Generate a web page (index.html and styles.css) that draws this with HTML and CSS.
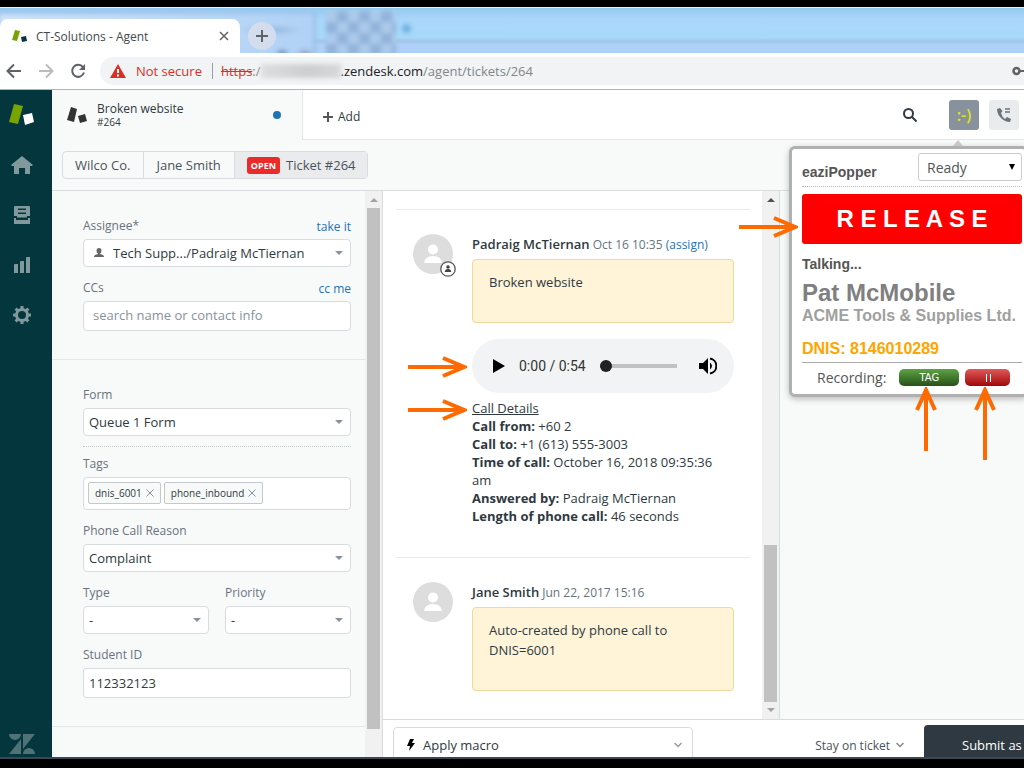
FILE: index.html
```html
<!DOCTYPE html>
<html lang="en">
<head>
    <meta charset="UTF-8">
    <meta name="viewport" content="width=device-width, initial-scale=1.0">
    <title>CT-Solutions - Agent</title>
    <link rel="stylesheet" href="styles.css">
</head>
<body>

<div class="browser">
    <div class="tab-strip">
        <div class="glass-text"></div>
        <div class="glass-checks"></div>
        <div class="browser-tab">
            <svg class="favicon" width="16" height="14" viewBox="0 0 16 14"><path d="M3 1l5 1-3 10-5-1z" fill="#78a300"/><path d="M9 8l5-1 1 5-5 1z" fill="#03363d"/></svg>
            <span>CT-Solutions - Agent</span>
            <button class="icon-btn tab-close" aria-label="Close tab"><svg width="10" height="10" viewBox="0 0 10 10"><path d="M1 1l8 8M9 1l-8 8" stroke="#5f6368" stroke-width="1.500"/></svg></button>
        </div>
        <button class="icon-btn new-tab" aria-label="New tab"><svg width="12" height="12" viewBox="0 0 12 12"><path d="M6 0v12M0 6h12" stroke="#5f6368" stroke-width="2"/></svg></button>
    </div>
    <div class="toolbar">
        <button class="icon-btn" aria-label="Back"><svg width="16" height="16" viewBox="0 0 16 16"><path d="M15 8H2M8 1.500L1.500 8 8 14.500" fill="none" stroke="#5f6368" stroke-width="2"/></svg></button>
        <button class="icon-btn" aria-label="Forward"><svg width="16" height="16" viewBox="0 0 16 16"><path d="M1 8h13M8 1.500L14.500 8 8 14.500" fill="none" stroke="#babcbe" stroke-width="2"/></svg></button>
        <button class="icon-btn" aria-label="Reload"><svg width="16" height="16" viewBox="0 0 16 16"><path d="M13 4.200A6 6 0 1 0 14 9.500" fill="none" stroke="#5f6368" stroke-width="2"/><path d="M15 1v6H9z" fill="#5f6368"/></svg></button>
        <div class="address">
            <svg width="16" height="14" viewBox="0 0 16 14"><path d="M8 0l8 14H0z" fill="#d93025"/><path d="M8 5v4M8 10.500v2" stroke="#fff" stroke-width="2"/></svg>
            <span class="not-secure">Not secure</span>
            <span class="url"><s>https</s>:/<i class="url-blur"></i><b>.zendesk.com</b>/agent/tickets/264</span>
            <svg class="key" width="20" height="10" viewBox="0 0 20 10"><circle cx="4.500" cy="5" r="3" fill="none" stroke="#5f6368" stroke-width="2.500"/><path d="M8 4h11v4h-4V6H8z" fill="#5f6368"/></svg>
        </div>
    </div>
</div>

<div class="app">
    <nav class="sidebar">
        <svg class="logo" width="26" height="22" viewBox="0 0 26 22"><path d="M5 0l9 2-5 18-9-2z" fill="#78a300"/><path d="M14 11l9-2 2 9-9 3z" fill="#fff"/></svg>
        <svg width="22" height="18" viewBox="0 0 22 18"><path d="M11 0l11 9-1 1h-2v8h-5v-6H8v6H3v-8H1l-1-1z"/></svg>
        <svg width="16" height="18" viewBox="0 0 16 18"><path d="M1 0h14q1 0 1 1v9h-3v1.500H3V10H0V1q0-1 1-1zM4 2.500V4h8V2.500zm0 4V8h8V6.500z" fill-rule="evenodd"/><path d="M0 12h2v2h12v-2h2v6H0z"/></svg>
        <svg width="16" height="18" viewBox="0 -1 16 18"><path d="M0 8q0-1 1-1h3v9H0zM6 5q0-1 1-1h3v12H6zM12 1q0-1 1-1h3v16h-4z"/></svg>
        <svg width="18" height="18" viewBox="0 0 18 18"><circle cx="9" cy="9" r="5.500" fill="none" stroke="#81999c" stroke-width="3"/><path d="M9 0v3M9 15v3M0 9h3M15 9h3M2.600 2.600l2.200 2.200M13.200 13.200l2.200 2.200M15.400 2.600l-2.200 2.200M4.800 13.200l-2.200 2.200" stroke="#81999c" stroke-width="3"/></svg>
        <svg class="zendesk" width="26" height="20" viewBox="0 0 26 20"><path d="M0 0h12a6 6 0 0 1-12 0zM12 5v15H0zM14 0h12L14 15zM14 20a6 6 0 0 1 12 0z"/></svg>
    </nav>

    <div class="workspace">
        <header class="top-bar">
            <div class="ticket-tab">
                <svg width="20" height="16" viewBox="0 0 20 16"><path d="M4 0l6 2-3 13-7-2z" fill="#333"/><path d="M11 9l7-2 2 7-7 2z" fill="#333"/></svg>
                <div class="ticket-tab-text">
                    <div>Broken website</div>
                    <div class="ticket-id">#264</div>
                </div>
                <span class="unsaved"></span>
            </div>
            <button class="add-tab"><svg width="10" height="10" viewBox="0 0 10 10"><path d="M5 0v10M0 5h10" stroke="#555" stroke-width="2"/></svg>Add</button>
            <button class="icon-btn search" aria-label="Search"><svg width="14" height="14" viewBox="0 0 14 14"><circle cx="5.500" cy="5.500" r="4.500" fill="none" stroke="#2f3941" stroke-width="2"/><path d="M9 9l4.500 4.500" stroke="#2f3941" stroke-width="2"/></svg></button>
            <button class="app-btn popper-btn">:-)</button>
            <button class="app-btn" aria-label="Talk"><svg width="14" height="14" viewBox="0 0 14 14"><path d="M3 0L0 1q0 5 4 9t9 4l1-3-4-2-2 2Q5 9 4 5l1.500-2z" fill="#68737d"/><path d="M8 1h5M8 4h5" stroke="#68737d" stroke-width="1.500"/></svg></button>
        </header>

        <div class="crumbs-bar">
            <div class="crumbs">
                <a href="#">Wilco Co.</a>
                <a href="#">Jane Smith</a>
                <a href="#" class="current"><span class="status">OPEN</span>Ticket #264</a>
            </div>
        </div>

        <div class="columns">
            <div class="form-panel">
                <form class="fields">
                    <section>
                        <div class="field">
                            <div class="label-row"><label for="assignee">Assignee*</label><a href="#">take it</a></div>
                            <div class="select with-icon">
                                <svg width="10" height="10" viewBox="0 0 10 10"><path d="M5 0q2.500 0 2.500 2.500T6 5.500V6q4 .5 4 3H0q0-2.500 4-3v-.5Q2.500 5 2.500 2.500T5 0z" fill="#666"/></svg>
                                <select id="assignee"><option>Tech Supp.../Padraig McTiernan</option></select>
                            </div>
                        </div>
                        <div class="field">
                            <div class="label-row"><label for="ccs">CCs</label><a href="#">cc me</a></div>
                            <input type="text" id="ccs" class="ccs" placeholder="search name or contact info">
                        </div>
                    </section>
                    <section>
                        <div class="field dotted">
                            <label for="form">Form</label>
                            <div class="select"><select id="form"><option>Queue 1 Form</option></select></div>
                        </div>
                        <div class="field">
                            <label for="tags">Tags</label>
                            <div class="tags">
                                <span class="tag">dnis_6001<svg width="8" height="8" viewBox="0 0 8 8"><path d="M0.500 0.500l7 7M7.500 0.500l-7 7" stroke="#87929d"/></svg></span>
                                <span class="tag">phone_inbound<svg width="8" height="8" viewBox="0 0 8 8"><path d="M0.500 0.500l7 7M7.500 0.500l-7 7" stroke="#87929d"/></svg></span>
                                <input type="text" id="tags">
                            </div>
                        </div>
                        <div class="field">
                            <label for="reason">Phone Call Reason</label>
                            <div class="select"><select id="reason"><option>Complaint</option></select></div>
                        </div>
                        <div class="field pair">
                            <div>
                                <label for="type">Type</label>
                                <div class="select"><select id="type"><option>-</option></select></div>
                            </div>
                            <div>
                                <label for="priority">Priority</label>
                                <div class="select"><select id="priority"><option>-</option></select></div>
                            </div>
                        </div>
                        <div class="field">
                            <label for="student">Student ID</label>
                            <input type="text" id="student" value="112332123">
                        </div>
                    </section>
                </form>
                <div class="scrollbar form-scroll"><i class="up"></i><div class="thumb"></div></div>
            </div>

            <div class="main">
                <div class="main-row">
                    <div class="conversation">
                        <article class="event">
                            <div class="avatar">
                                <svg width="40" height="40" viewBox="0 0 40 40"><circle cx="20" cy="20" r="20" fill="#ddd"/><circle cx="20" cy="15.500" r="5" fill="#fff"/><path d="M11 29q1-7 9-7t9 7z" fill="#fff"/></svg>
                                <svg class="avatar-badge" width="16" height="16" viewBox="0 0 16 16"><circle cx="8" cy="8" r="7.200" fill="#fff" stroke="#555" stroke-width="1.300"/><circle cx="8" cy="6" r="1.800" fill="#444"/><path d="M4.800 11q0-3 3.200-3t3.200 3z" fill="#444"/></svg>
                            </div>
                            <div class="event-body">
                                <div class="byline"><strong>Padraig McTiernan</strong> <time>Oct 16 10:35</time> <a href="#">(assign)</a></div>
                                <div class="note">Broken website</div>
                                <div class="player">
                                    <svg class="pointer" width="60" height="24" viewBox="0 0 60 24"><path d="M1 12h54M36 3l21 9-21 9"/></svg>
                                    <button class="icon-btn play" aria-label="Play"><svg width="12" height="14" viewBox="0 0 12 14"><path d="M0 0l12 7-12 7z"/></svg></button>
                                    <span class="time">0:00 / 0:54</span>
                                    <input type="range" min="0" max="54" value="0" aria-label="Seek">
                                    <button class="icon-btn" aria-label="Mute"><svg width="18" height="18" viewBox="0 0 18 18"><path d="M0 6h4l5-5v16l-5-5H0z"/><path d="M11 5.500q4 3.500 0 7" /><path d="M11 1.500a7.600 7.600 0 0 1 0 15" fill="none" stroke="#000" stroke-width="2"/></svg></button>
                                </div>
                                <div class="call-details">
                                    <svg class="pointer" width="60" height="24" viewBox="0 0 60 24"><path d="M1 12h54M36 3l21 9-21 9"/></svg>
                                    <div><u>Call Details</u></div>
                                    <div><b>Call from:</b> +60 2</div>
                                    <div><b>Call to:</b> +1 (613) 555-3003</div>
                                    <div><b>Time of call:</b> October 16, 2018 09:35:36 am</div>
                                    <div><b>Answered by:</b> Padraig McTiernan</div>
                                    <div><b>Length of phone call:</b> 46 seconds</div>
                                </div>
                            </div>
                        </article>
                        <article class="event">
                            <div class="avatar">
                                <svg width="40" height="40" viewBox="0 0 40 40"><circle cx="20" cy="20" r="20" fill="#ddd"/><circle cx="20" cy="15.500" r="5" fill="#fff"/><path d="M11 29q1-7 9-7t9 7z" fill="#fff"/></svg>
                            </div>
                            <div class="event-body">
                                <div class="byline"><strong>Jane Smith</strong> <time>Jun 22, 2017 15:16</time></div>
                                <div class="note">Auto-created by phone call to DNIS=6001</div>
                            </div>
                        </article>
                    </div>
                    <div class="scrollbar main-scroll"><i class="up dark"></i><div class="thumb"></div><i class="down"></i></div>
                    <aside class="apps-pane"></aside>
                </div>
                <footer class="actions">
                    <button class="macro">
                        <svg width="8" height="12" viewBox="0 0 8 12"><path d="M3 0h4L5 4h3L2 12l1-5H0z"/></svg>
                        Apply macro
                        <svg class="chevron" width="8" height="6" viewBox="0 0 8 6"><path d="M0.500 1L4 4.500 7.500 1" fill="none" stroke="#999" stroke-width="1.500"/></svg>
                    </button>
                    <button class="stay">Stay on ticket <svg width="8" height="6" viewBox="0 0 8 6"><path d="M0.500 1L4 4.500 7.500 1" fill="none" stroke="#888" stroke-width="1.500"/></svg></button>
                    <button class="submit">Submit as</button>
                </footer>
            </div>
        </div>
    </div>

    <div class="popper">
        <div class="popper-head">
            <label for="agent-state">eaziPopper</label>
            <div class="state"><select id="agent-state"><option>Ready</option></select></div>
        </div>
        <div class="release-row">
            <svg class="pointer" width="60" height="24" viewBox="0 0 60 24"><path d="M1 12h54M36 3l21 9-21 9"/></svg>
            <button class="release">R E L E A S E</button>
        </div>
        <div class="call-state">Talking...</div>
        <div class="caller">Pat McMobile</div>
        <div class="company">ACME Tools &amp; Supplies Ltd.</div>
        <div class="dnis">DNIS: 8146010289</div>
        <div class="recording">
            <span>Recording:</span>
            <div class="rec-item">
                <button class="rec-btn tag-btn">TAG</button>
                <svg class="pointer-up" width="24" height="64" viewBox="0 0 24 64"><path d="M12 64V4M3 23L12 3l9 20"/></svg>
            </div>
            <div class="rec-item">
                <button class="rec-btn pause-btn" aria-label="Pause recording"><svg width="6" height="8" viewBox="0 0 6 8"><path d="M1.500 0v8M5.500 0v8" stroke="#fff"/></svg></button>
                <svg class="pointer-up" width="24" height="73" viewBox="0 0 24 73"><path d="M12 73V4M3 23L12 3l9 20"/></svg>
            </div>
        </div>
    </div>
</div>

</body>
</html>
```

FILE: styles.css
```css
* {
    box-sizing: border-box;
}

body {
    margin: 0;
    height: 100vh;
    display: flex;
    flex-direction: column;
    overflow: hidden;
    border-top: 7px solid #000;
    border-bottom: 9px solid #000;
    background-color: #fff;
    color: #2f3941;
    font-family: "Open Sans", "Noto Sans", sans-serif;
    font-size: 13px;
}

button, input, select {
    font-family: inherit;
    font-size: inherit;
    color: inherit;
    margin: 0;
}

svg {
    display: block;
    flex: none;
}

a {
    color: #1f73b7;
    text-decoration: none;
}

.icon-btn {
    display: flex;
    align-items: center;
    justify-content: center;
    padding: 0;
    border: none;
    background: none;
}

/* Browser chrome */
.tab-strip {
    position: relative;
    display: flex;
    align-items: flex-end;
    height: 46px;
    background: linear-gradient(#93cbee 0%, #aad6fa 25%, #a6d9fa 65%, #a0c6ea 74%, #afd0f8 82%, #afd0f8 100%);
    border-top: 1px solid #e4f1fb;
    overflow: hidden;
}

.tab-strip::after {
    content: "";
    position: absolute;
    left: 402px;
    top: 16px;
    width: 9px;
    height: 9px;
    border-radius: 50%;
    background-color: #6fb2e2;
    filter: blur(2px);
}

/* Window behind the glass frame */
.glass-text {
    position: absolute;
    left: -4px;
    top: 3px;
    width: 320px;
    height: 60px;
    border: 3px solid #9cc0ea;
    background:
        radial-gradient(ellipse 32px 5px at 272px 16px, #8fb0d8, transparent),
        radial-gradient(ellipse 8px 6px at 283px 40px, #5f7fa8, transparent),
        radial-gradient(ellipse 10px 6px at 306px 40px, #8f9bb0, transparent),
        linear-gradient(90deg, #cfe2f7, #b0d2f6);
    filter: blur(2px);
}

.glass-checks {
    position: absolute;
    left: 326px;
    top: 3px;
    width: 70px;
    height: 50px;
    background: repeating-conic-gradient(#93b4da 0 25%, #abc9ea 0 50%) 0 0 / 22px 22px;
    filter: blur(2px);
}

.browser-tab {
    position: relative;
    display: flex;
    align-items: center;
    width: 240px;
    height: 34px;
    padding: 0 8px 0 12px;
    gap: 8px;
    border-radius: 8px 8px 0 0;
    background-color: #fff;
    color: #45494d;
    font-size: 12px;
}

.tab-close {
    width: 16px;
    margin-left: auto;
}

.new-tab {
    position: relative;
    width: 28px;
    height: 28px;
    margin: 0 0 3px 8px;
    border-radius: 50%;
    background-color: #d3dded;
}

.toolbar {
    display: flex;
    align-items: center;
    gap: 16px;
    height: 37px;
    padding-left: 6px;
    border-bottom: 1px solid #b4b4b6;
    background-color: #fff;
}

.address {
    display: flex;
    align-items: center;
    flex: 1;
    height: 28px;
    margin-left: -2px;
    padding-left: 10px;
    border-radius: 14px 0 0 14px;
    background-color: #f1f3f4;
    color: #80868b;
}

.not-secure {
    margin-left: 10px;
    padding-right: 10px;
    border-right: 1px solid #9aa0a6;
    line-height: 16px;
    color: #d93025;
}

.url {
    display: flex;
    align-items: center;
    margin-left: 8px;
}

.url s {
    color: #d93025;
}

.url b {
    font-weight: normal;
    color: #202124;
}

.url-blur {
    width: 80px;
    height: 14px;
    background: linear-gradient(90deg, #dddee0, #ccced0 60%, #d8d9db);
    filter: blur(2px);
}

.key {
    margin-left: auto;
    margin-right: -8px;
}

/* App shell */
.app {
    position: relative;
    display: flex;
    flex: 1;
    min-height: 0;
    border-bottom: 2px solid #3d4753;
}

.sidebar {
    display: flex;
    flex-direction: column;
    align-items: center;
    width: 52px;
    padding: 14px 8px 3px 0;
    gap: 32px;
    background-color: #03363d;
    fill: #81999c;
}

.logo {
    margin-bottom: -2px;
}

.zendesk {
    margin-top: auto;
    fill: #4f7277;
}

.workspace {
    display: flex;
    flex-direction: column;
    flex: 1;
    min-width: 0;
}

.top-bar {
    display: flex;
    align-items: center;
    height: 50px;
    padding-right: 5px;
    border-bottom: 1px solid #e4e6e8;
}

.ticket-tab {
    display: flex;
    align-items: center;
    align-self: stretch;
    width: 251px;
    margin-bottom: -1px;
    padding: 0 21px 0 15px;
    gap: 10px;
    border-right: 1px solid #e4e6e8;
    background-color: #f8f9f9;
    font-size: 12px;
    line-height: 14px;
}

.ticket-id {
    font-size: 10px;
    line-height: 12px;
}

.unsaved {
    width: 8px;
    height: 8px;
    margin-left: auto;
    border-radius: 50%;
    background-color: #1f73b7;
}

.add-tab {
    display: flex;
    align-items: center;
    gap: 5px;
    padding: 4px 20px 0;
    border: none;
    background: none;
    font-size: 12px;
}

.search {
    margin-left: auto;
    margin-right: 32px;
}

.app-btn {
    display: flex;
    align-items: center;
    justify-content: center;
    width: 30px;
    height: 30px;
    padding: 0;
    border: none;
    border-radius: 3px;
    background-color: #e9ebed;
}

.popper-btn {
    margin-right: 10px;
    background-color: #87929d;
    color: #dfe31c;
    font-size: 16px;
    font-weight: 600;
}

.crumbs-bar {
    display: flex;
    align-items: center;
    height: 51px;
    padding-left: 10px;
    border-bottom: 1px solid #d8dcde;
    background-color: #f8f9f9;
}

.crumbs {
    display: flex;
    height: 28px;
    border: 1px solid #d8dcde;
    border-radius: 4px;
}

.crumbs a {
    display: flex;
    align-items: center;
    padding: 0 13px 0 12px;
    color: #49545c;
}

.crumbs a + a {
    border-left: 1px solid #d8dcde;
}

.crumbs .current {
    padding-right: 11px;
    background-color: #e9ebed;
}

.status {
    margin-right: 6px;
    padding: 0 4px;
    border-radius: 3px;
    background-color: #eb2a2a;
    color: #fff;
    font-size: 9px;
    font-weight: bold;
    line-height: 17px;
}

.columns {
    display: flex;
    flex: 1;
    min-height: 0;
}

/* Ticket fields */
.form-panel {
    display: flex;
    width: 331px;
    border-right: 1px solid #d8dcde;
    background-color: #f8f9f9;
    overflow: hidden;
}

.fields {
    flex: 1;
    min-width: 0;
}

.fields section {
    padding: 26px 14px 28px 31px;
    border-bottom: 1px solid #e4e6e8;
}

.field + .field {
    margin-top: 12px;
}

.field label {
    display: block;
    margin-bottom: 4px;
    color: #68737d;
    font-size: 12px;
    line-height: 18px;
}

.label-row {
    display: flex;
    justify-content: space-between;
    font-size: 12px;
    line-height: 20px;
}

.label-row a {
    height: 18px;
}

.field.dotted {
    padding-bottom: 10px;
    border-bottom: 1px dotted #c2c8cc;
}

.field.dotted + .field {
    margin-top: 8px;
}

.select {
    position: relative;
}

.select::after {
    content: "";
    position: absolute;
    right: 8px;
    top: 12px;
    border: 4px solid transparent;
    border-top-color: #87929d;
    pointer-events: none;
}

.select select {
    display: block;
    width: 100%;
    height: 28px;
    padding: 0 20px 0 5px;
    border: 1px solid #d8dcde;
    border-radius: 4px;
    background-color: #fff;
    appearance: none;
}

.with-icon svg {
    position: absolute;
    left: 11px;
    top: 9px;
}

.with-icon select {
    padding-left: 29px;
}

.field > input {
    display: block;
    width: 100%;
    height: 30px;
    padding: 0 5px;
    border: 1px solid #d8dcde;
    border-radius: 3px;
    background-color: #fff;
}

.field > .ccs {
    padding: 0 9px 3px;
    border-radius: 4px;
}

.ccs::placeholder {
    color: #87929d;
}

.tags {
    display: flex;
    align-items: flex-start;
    gap: 3px;
    height: 33px;
    padding: 4px;
    border: 1px solid #d8dcde;
    border-radius: 4px;
    background-color: #fff;
}

.tags input {
    flex: 1;
    min-width: 0;
    padding: 0;
    border: none;
    background: none;
}

.tag {
    display: flex;
    align-items: center;
    height: 22px;
    padding: 0 6px;
    gap: 4px;
    border: 1px solid #c2c8cc;
    border-radius: 2px;
    background-color: #f8f9f9;
    font-size: 10px;
}

.pair {
    display: flex;
    gap: 16px;
}

.pair > div {
    flex: 1;
}

/* Scrollbars */
.scrollbar {
    display: flex;
    flex: none;
    flex-direction: column;
    align-items: center;
    width: 17px;
    background-color: #f1f1f1;
}

.scrollbar i {
    flex: none;
    height: 17px;
    border: 4px solid transparent;
}

.scrollbar .up {
    border-top-width: 3px;
    border-bottom-color: #a3a3a3;
    height: 7px;
    margin: 4px 0 6px;
}

.scrollbar .dark {
    border-bottom-color: #505050;
}

.scrollbar .down {
    height: 8px;
    margin: 6px 0 3px;
    border-top-color: #a3a3a3;
}

.thumb {
    width: 13px;
    background-color: #c1c1c1;
}

.form-scroll .thumb {
    height: 92%;
}

.main-scroll {
    border-right: 1px solid #d8dcde;
    width: 18px;
}

.main-scroll .thumb {
    height: 157px;
    margin-top: auto;
}

/* Conversation */
.main {
    display: flex;
    flex-direction: column;
    flex: 1;
    min-width: 0;
}

.main-row {
    display: flex;
    flex: 1;
    min-height: 0;
}

.conversation {
    flex: 1;
    min-width: 0;
    padding: 18px 12px 0 13px;
    overflow: hidden;
}

.apps-pane {
    width: 244px;
    background-color: #f8f9f9;
}

.event {
    display: flex;
    gap: 19px;
    padding: 24px 16px 32px 17px;
    border-top: 1px solid #e9ebed;
}

.avatar {
    position: relative;
}

.avatar-badge {
    position: absolute;
    right: -3px;
    top: 27px;
}

.event-body {
    flex: 1;
    min-width: 0;
}

.byline {
    height: 20px;
    margin-bottom: 5px;
    line-height: 20px;
    font-size: 12px;
    white-space: nowrap;
}

.byline strong {
    font-size: 13px;
    font-weight: 600;
}

.byline time {
    color: #68737d;
}

.note {
    padding: 12px 16px 30px;
    border: 1px solid #eed99f;
    border-radius: 4px;
    background-color: #fff4d8;
    line-height: 20px;
}

.player {
    position: relative;
    display: flex;
    align-items: center;
    height: 54px;
    margin-top: 16px;
    padding: 0 17px 0 21px;
    border-radius: 27px;
    background-color: #f1f3f4;
}

.time {
    margin: 0 14px;
    color: #333;
    font-family: Roboto, sans-serif;
    font-size: 14px;
}

.player input {
    flex: 1;
    min-width: 0;
    height: 12px;
    margin-right: 22px;
    background: linear-gradient(#c1c1c1, #c1c1c1) center / 100% 4px no-repeat;
    appearance: none;
}

.player input::-webkit-slider-thumb {
    width: 12px;
    height: 12px;
    border-radius: 50%;
    background-color: #212121;
    appearance: none;
}

.call-details {
    position: relative;
    margin-top: 6px;
    line-height: 18px;
}

/* Orange callout arrows */
.pointer, .pointer-up {
    position: absolute;
    fill: none;
    stroke: #ff6a00;
    stroke-width: 4px;
}

.pointer {
    right: 100%;
    top: 50%;
    margin: -11px 5px 0 0;
}

.call-details .pointer {
    top: 0;
    margin-top: -1px;
}

.pointer-up {
    left: 50%;
    top: 100%;
    margin: 1px 0 0 -15px;
}

/* Footer */
.actions {
    display: flex;
    align-items: flex-start;
    height: 38px;
    padding-left: 10px;
    border-top: 1px solid #d8dcde;
    overflow: hidden;
}

.macro {
    display: flex;
    align-items: center;
    flex: none;
    width: 300px;
    height: 36px;
    margin-top: 7px;
    padding: 0 10px 0 13px;
    gap: 8px;
    border: 1px solid #d8dcde;
    border-radius: 4px;
    background-color: #fff;
}

.chevron {
    margin-left: auto;
}

.stay {
    display: flex;
    align-items: center;
    gap: 6px;
    height: 36px;
    margin: 7px 20px 0 auto;
    padding: 0;
    border: none;
    background: none;
    color: #49545c;
    font-size: 12px;
}

.submit {
    width: 100px;
    height: 40px;
    margin-top: 5px;
    padding: 0 0 0 38px;
    border: none;
    border-radius: 4px 0 0 0;
    background-color: #2f3941;
    color: #fff;
    text-align: left;
    white-space: nowrap;
}

/* eaziPopper popup */
.popper {
    position: absolute;
    top: 56px;
    right: -4px;
    width: 239px;
    height: 251px;
    padding: 4px 3px 0 10px;
    border: 3px solid #b0b0b0;
    border-radius: 6px;
    background-color: #fff;
    box-shadow: 0 2px 6px rgba(0, 0, 0, 0.25);
    color: #555;
    font-family: "Liberation Sans", Arial, sans-serif;
    font-weight: bold;
}

.popper::before {
    content: "";
    position: absolute;
    left: 161px;
    top: -9px;
    border: 5px solid transparent;
    border-top: none;
    border-bottom: 6px solid #c8c8c8;
}

.popper-head {
    display: flex;
    justify-content: space-between;
    height: 34px;
    border-bottom: 1px dotted #bbb;
    font-size: 14px;
}

.popper-head label {
    line-height: 38px;
}

.state {
    position: relative;
    width: 104px;
}

.state::after {
    content: "";
    position: absolute;
    right: 7px;
    top: 11px;
    border: 3px solid transparent;
    border-top: 6px solid #000;
    border-bottom: none;
    pointer-events: none;
}

.state select {
    width: 100%;
    height: 28px;
    padding: 0 8px;
    border: 1px solid #ccc;
    border-radius: 3px;
    background-color: #fff;
    font-family: "Open Sans", sans-serif;
    appearance: none;
}

.release-row {
    position: relative;
    margin-top: 7px;
}

.release {
    display: block;
    width: 100%;
    height: 50px;
    border: none;
    border-radius: 3px;
    background-color: #f00;
    color: #fff;
    font-size: 24px;
    font-weight: bold;
}

.release-row .pointer {
    margin-right: 4px;
    margin-top: -4px;
}

.call-state {
    margin-top: 10px;
    font-size: 14px;
    line-height: 20px;
}

.caller {
    margin-top: 7px;
    color: #808080;
    font-size: 24px;
    line-height: 24px;
}

.company {
    color: #a0a0a0;
    font-size: 16px;
    line-height: 22px;
    white-space: nowrap;
}

.dnis {
    margin-top: 12px;
    padding-bottom: 4px;
    border-bottom: 1px solid #aaa;
    color: #ffa500;
    font-size: 16px;
    line-height: 19px;
}

.recording {
    display: flex;
    align-items: center;
    height: 29px;
    padding-left: 15px;
    font-family: "Open Sans", sans-serif;
    font-size: 14px;
    font-weight: normal;
}

.rec-item {
    position: relative;
    margin-left: 6px;
}

.recording span + .rec-item {
    margin-left: 13px;
}

.rec-btn {
    display: flex;
    align-items: center;
    justify-content: center;
    height: 17px;
    padding: 0;
    border: none;
    border-radius: 5px;
    color: #fff;
    font-family: "DejaVu Sans", sans-serif;
    font-size: 10px;
}

.tag-btn {
    width: 60px;
    background: linear-gradient(#5fa243, #27511a);
}

.pause-btn {
    width: 45px;
    background: linear-gradient(#e05a5a, #a00808);
}
```
